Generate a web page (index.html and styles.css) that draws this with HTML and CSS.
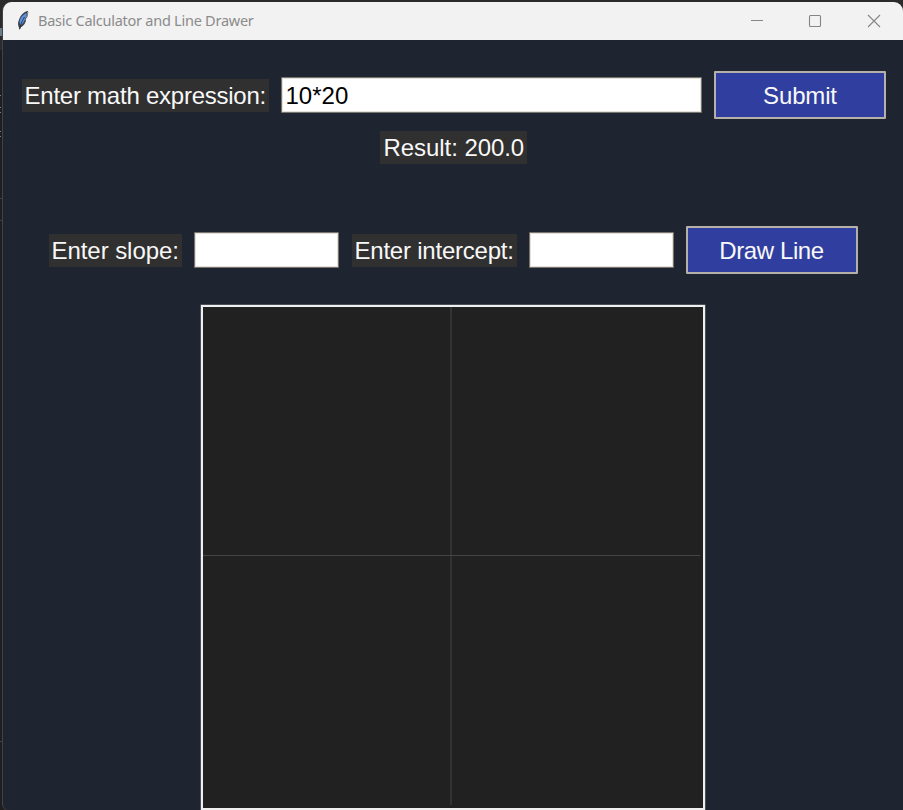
FILE: index.html
```html
<!DOCTYPE html>
<html lang="en">
<head>
<meta charset="utf-8">
<title>Basic Calculator and Line Drawer</title>
<link rel="stylesheet" href="styles.css">
</head>
<body>
<svg class="backdrop" width="4" height="810">
  <rect width="4" height="810" fill="#1e1e1e"/>
  <rect width="4" height="50" fill="#2c2b2b"/>
  <path d="M0 28H2V36H0Z" fill="#6d7f86"/>
  <path d="M0 95H1V96H0ZM0 107H1V108H0ZM0 112H1V113H0ZM0 131H1V132H0ZM0 136H1V137H0Z" fill="#5b8ba3"/>
  <path d="M0 198H2V199H0ZM0 220H2V221H0ZM0 741H3V742H0Z" fill="#404040"/>
</svg>
<div class="window">
  <header class="titlebar">
    <svg class="feather" width="14" height="22" viewBox="0 0 14 22">
      <path d="M12 1C8.500 1.500 5 4.500 3.500 8.500C2 11.500 1.500 14 2.700 17L3.700 20L4.500 17.500C8 15.500 9.500 13 10 10.500L9.500 9.500L11.300 7C12 5 12.500 3 12 1Z" fill="#3d444e"/>
      <path d="M10.500 3C7 4.500 4 8 3.600 12L4.600 15.500C8.300 12.500 9.300 9 10.200 5.500Z" fill="#5b94e0"/>
      <path d="M8.500 7C7 9.500 5 13 3.800 19" fill="none" stroke="#16181d" stroke-width=".7"/>
      <path d="M11.500 2C11.700 4.500 10.700 6.500 9.700 8" fill="none" stroke="#a3a8ae" stroke-width=".8"/>
    </svg>
    <span class="title">Basic Calculator and Line Drawer</span>
    <svg class="controls" width="130" height="14" viewBox="0 0 130 14" fill="none" stroke="#858585" stroke-width="1.100">
      <path d="M0 6.500H12"/>
      <rect x="58.500" y="1.500" width="11" height="11" rx="1"/>
      <path d="M117 1L129 13M129 1L117 13"/>
    </svg>
  </header>
  <main class="content">
    <div class="row row-expression">
      <label class="label label-expression" for="expression">Enter math expression:</label>
      <input class="entry entry-wide" id="expression" type="text" value="10*20">
      <button class="button" type="button">Submit</button>
    </div>
    <output class="label label-result">Result: 200.0</output>
    <div class="row row-line">
      <label class="label label-slope" for="slope">Enter slope:</label>
      <input class="entry" id="slope" type="text">
      <label class="label label-intercept" for="intercept">Enter intercept:</label>
      <input class="entry" id="intercept" type="text">
      <button class="button button-draw" type="button">Draw Line</button>
    </div>
    <svg class="plot" viewBox="0 0 500 501">
      <path d="M0 248.500H497M248 0V498" stroke="#454545" stroke-width="1"/>
    </svg>
  </main>
</div>
</body>
</html>
```
FILE: styles.css
```css
* { box-sizing: border-box; }
body {
  display: flow-root;
  margin: 0;
  height: 810px;
  overflow: hidden;
  background: #2c2b2b;
  font-family: "Liberation Sans", Arial, sans-serif;
}
.backdrop {
  position: absolute;
  left: 0;
  top: 0;
}
.window {
  position: relative;
  height: 808px;
  margin-top: 2px;
  margin-left: 2px;
  border-left: 1px solid #424242;
  border-radius: 9px 9px 0 6px;
  overflow: hidden;
  background: #1e2430;
}
.titlebar {
  display: flex;
  align-items: center;
  height: 38px;
  padding: 0 22px 0 13px;
  background: #f2f2f2;
}
.title {
  margin: -2px 0 0 8px;
  font: 14.500px/20px "Noto Sans", "Open Sans", sans-serif;
  letter-spacing: -0.250px;
  color: #8b8b8b;
}
.controls { margin-left: auto; }
.content {
  display: flex;
  flex-direction: column;
  align-items: center;
  padding-top: 31px;
}
.row {
  display: flex;
  align-items: center;
  gap: 12px;
  height: 48px;
}
.row-expression { padding-left: 1px; }
.label {
  display: block;
  height: 33px;
  padding-left: 3px;
  background: #303030;
  color: #f8f8f8;
  font-size: 24px;
  line-height: 33px;
  letter-spacing: -0.060px;
  white-space: nowrap;
}
.label-expression { width: 247px; letter-spacing: -0.240px; }
.label-result { width: 147px; margin: 12px 0 62px; padding-left: 4px; }
.label-slope { width: 133px; }
.label-intercept { width: 165px; margin-left: 1px; letter-spacing: -0.220px; }
.entry {
  width: 145px;
  height: 36px;
  padding: 1px 4px 0;
  border: 1px solid #77736f;
  border-radius: 1px;
  box-shadow: inset 0 0 0 1px #e6e0da;
  outline: none;
  background: #fff;
  color: #000;
  font: 24px "Liberation Sans", Arial, sans-serif;
}
.entry-wide { width: 421px; }
.button {
  width: 172px;
  height: 48px;
  padding: 1px 0 0 1px;
  border: 2px solid #b5b0aa;
  border-radius: 1px;
  background: #303f9f;
  color: #f8f8f8;
  font: 24px "Liberation Sans", Arial, sans-serif;
  letter-spacing: -0.150px;
}
.button-draw { padding-left: 0; letter-spacing: -0.400px; }
.plot {
  width: 504px;
  height: 505px;
  margin-top: 31px;
  border: 2px solid #efefef;
  box-shadow: 0 0 0 .5px #777b82;
  background: #212121;
}
```
